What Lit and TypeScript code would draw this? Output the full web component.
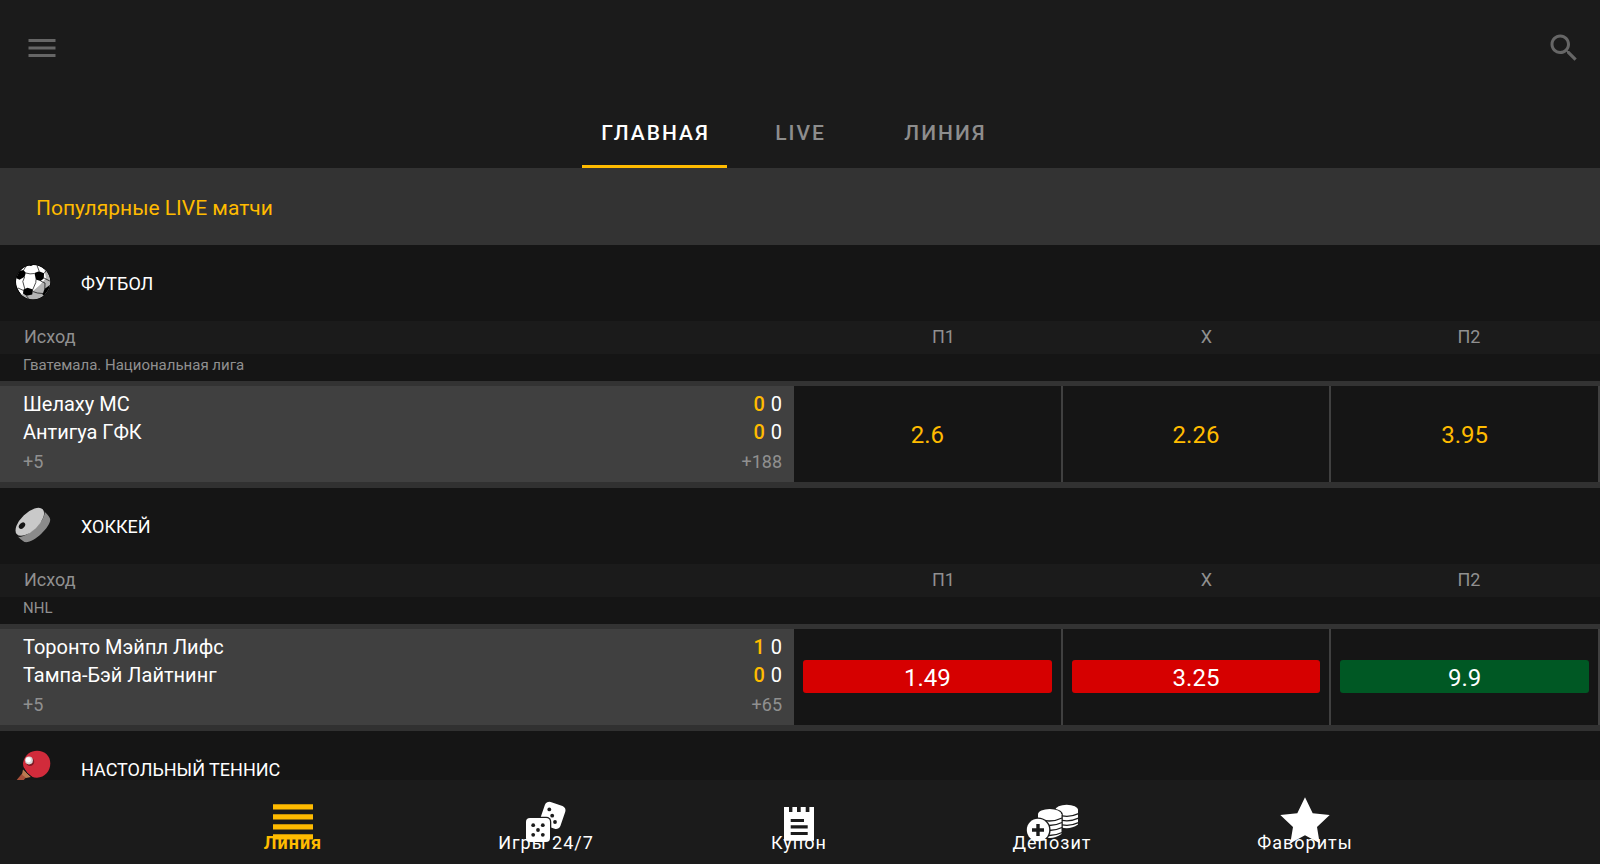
import { LitElement, html, svg, css, nothing } from "lit";
import { customElement, property, state } from "lit/decorators.js";
import { classMap } from "lit/directives/class-map.js";

type Trend = "same" | "down" | "up";
interface Odd { value: string; trend: Trend }
interface Match {
  league: string;
  teams: { name: string; total: string; period: string }[];
  left: string;
  right: string;
  odds: Odd[];
}
interface Sport { icon: string; name: string; matches: Match[] }

const SPORTS: Sport[] = [
  {
    icon: "football",
    name: "ФУТБОЛ",
    matches: [
      {
        league: "Гватемала. Национальная лига",
        teams: [
          { name: "Шелаху МС", total: "0", period: "0" },
          { name: "Антигуа ГФК", total: "0", period: "0" },
        ],
        left: "+5",
        right: "+188",
        odds: [
          { value: "2.6", trend: "same" },
          { value: "2.26", trend: "same" },
          { value: "3.95", trend: "same" },
        ],
      },
    ],
  },
  {
    icon: "hockey",
    name: "ХОККЕЙ",
    matches: [
      {
        league: "NHL",
        teams: [
          { name: "Торонто Мэйпл Лифс", total: "1", period: "0" },
          { name: "Тампа-Бэй Лайтнинг", total: "0", period: "0" },
        ],
        left: "+5",
        right: "+65",
        odds: [
          { value: "1.49", trend: "down" },
          { value: "3.25", trend: "down" },
          { value: "9.9", trend: "up" },
        ],
      },
    ],
  },
  { icon: "tennis", name: "НАСТОЛЬНЫЙ ТЕННИС", matches: [] },
];

const SPORT_ICONS: Record<string, unknown> = {
  football: svg`
    <defs><clipPath id="ball"><circle cx="18" cy="18" r="17.2"/></clipPath></defs>
    <circle cx="18" cy="18" r="17.6" fill="#000"/>
    <g clip-path="url(#ball)">
      <circle cx="18" cy="18" r="17" fill="#fff"/>
      <path d="M29 3 31 14 Q25 22 18 27 Q12 31 4 30 L10 38 H38 V3Z" fill="#b4b4b4"/>
      <g fill="#000">
        <path d="M19.5 9 24 7.2 29 9.2 28.800 14.500 25.500 17 20.800 15.500Z"/>
        <path d="M4 7 8.500 6 10.800 8.800 9.600 12.800 4.500 15.800 1 14Z"/>
        <path d="M8.500 25.500 12.500 23.800 18 25.500 17.200 30.500 11.500 31.800 8 29.500Z"/>
        <path d="M29.500 25 35.500 20.500 36 29 30 33.500 27.500 30.500Z"/>
        <path d="M11 1 15 0 20 0 16 2Z"/>
        <path d="M30 3.500 32.500 4.500 36 12 33 9.500Z"/>
        <path d="M0 23 2.200 23.500 4.500 29 2 30Z"/>
      </g>
      <g fill="none" stroke="#000" stroke-width=".7">
        <path d="M10.800 9Q15 10.500 19.500 9.500M22 1.500 24.200 7.200M29 9.500 31.500 6M9.600 13 7.800 17.500 9.800 25M21 15.500 20.800 18.500 17.800 25.500M25.500 17 30 19 29.800 25M17.800 27.500Q22 29.500 28 29.500M11.500 32 14.500 35.500M3 24 8.500 26.500M29 14 34.800 17M8.500 6.300 11.500 1.500"/>
      </g>
    </g>`,
  hockey: svg`
    <path d="M4.5 28.5 27.5 3 C31 6 35 9.500 35.200 12.500 C35.500 20 18 37 9.500 35 C6.500 33 4 31 2.500 29Z" fill="#8b8b8b"/>
    <path d="M1.500 27.500C3 30.500 11 28.500 20 20C27.500 12.500 30.500 5.500 27.500 2.800" fill="none" stroke="#151515" stroke-width="2"/>
    <ellipse cx="14.800" cy="14.800" rx="17.900" ry="8.800" transform="rotate(-44 14.800 14.800)" fill="#c9c9c9"/>
    <ellipse cx="7" cy="18.600" rx="3.700" ry="2.500" transform="rotate(-44 7 18.600)" fill="#151515"/>`,
  tennis: svg`
    <path d="M7.500 23 11.500 27 4 35 0 32Z" fill="#a5503a"/>
    <path d="M8 19.500 16 27 11 28 7 24.500Z" fill="#b97a50"/>
    <path d="M8 13C10 4 16 .800 22 .800C30 .800 35.300 6 35.300 13.500C35.300 21 30 27.500 22 27.700C18.500 27.800 16 26.500 13.500 24C10.500 21 8 18 8 13Z" fill="#d12b3b"/>
    <path d="M8.300 17.500Q11 23.500 17 27.300" fill="none" stroke="#151515" stroke-width="1"/>
    <circle cx="15" cy="11.800" r="4.200" fill="#7d1a24"/>
    <circle cx="14" cy="10.500" r="3.900" fill="#d7d7d7"/>
    <circle cx="13.300" cy="9.800" r="2.600" fill="#fff"/>`,
};

const NAV_ICONS: Record<string, unknown> = {
  line: svg`<path d="M5 8.300h40v5.200H5zM5 18.300h40v5.200H5zM5 28.300h40v5.200H5zM5 38.300h40v5.200H5z"/>`,
  games: svg`
    <rect x="21" y="7.600" width="21.500" height="24" rx="4.500" transform="rotate(19 32.500 19.200)"/>
    <g class="hole"><circle cx="28.300" cy="13.400" r="1.900"/><circle cx="31.200" cy="19.700" r="1.900"/><circle cx="34" cy="26" r="1.900"/>
    <rect x="3.800" y="20.700" width="26.500" height="26.500" rx="5"/></g>
    <rect x="5" y="22" width="24" height="24" rx="4"/>
    <g class="hole"><circle cx="12.200" cy="29.200" r="1.900"/><circle cx="21.800" cy="29.200" r="1.900"/><circle cx="17" cy="34" r="1.900"/><circle cx="12.200" cy="38.800" r="1.900"/><circle cx="21.800" cy="38.800" r="1.900"/></g>`,
  coupon: svg`<path fill-rule="evenodd" d="M10 11h5v5h3.400v-5H23v5h3.700v-5h5v5h3.700v-5H40v33.700H10zM16.700 23h13.300v3H16.700zM16.700 29.300h17v3.200h-17zM16.700 35.900h17v3h-17z"/>`,
  deposit: svg`
    <path d="M28.500 13.500V28.500Q39.700 36 51 28.500V13.500Z"/>
    <ellipse cx="39.700" cy="14" rx="11.400" ry="5.200"/>
    <g class="cut"><path d="M30 18.500Q41 22.500 51.500 17.700M30 23Q41 27 51.500 22.200M30 27.500Q41 31.500 51.500 26.700"/></g>
    <path class="hole" d="M9.500 18.500C10 10.500 35.800 10.500 35.800 18.500V41H9.500Z"/>
    <path d="M11 18.500V38Q23 46 34.500 38V18.500Z"/>
    <ellipse cx="22.700" cy="18.300" rx="11.700" ry="5.200"/>
    <g class="cut"><path d="M11 23Q24 27.500 35 22M11 27.500Q24 32 35 26.500M11 32.500Q24 37 35 31.500M11 37.500Q24 42 35 36.500"/></g>
    <circle class="hole" cx="11" cy="34" r="12.600"/>
    <circle cx="11" cy="34" r="11.200"/>
    <path class="hole" d="M9.300 28h3.400v4.300H17v3.400h-4.300V40H9.300v-4.300H5v-3.400h4.300z"/>`,
  star: svg`<path d="M25 1.300 32.700 17.300 49.700 19 37 31 39.700 47.300 25 39.300 10.300 47.300 13 31 .3 19 17.300 17.300Z"/>`,
};

@customElement("odd-button")
export class OddButton extends LitElement {
  @property() value = "";
  @property() trend: Trend = "same";

  static styles = css`
    :host {
      display: flex;
      align-items: center;
      padding: 0 9px 1px;
      border-right: 2px solid #404040;
      background: #151515;
    }
    button {
      flex: 1;
      height: 33px;
      padding: 3px 0 0;
      border: 0;
      border-radius: 3px;
      background: none;
      color: #ffbb00;
      font: 400 24px/30px Roboto, sans-serif;
      cursor: pointer;
    }
    .down { background: #d60000; color: #fff; }
    .up { background: #005824; color: #fff; }
  `;

  render() {
    return html`<button type="button" class=${classMap({ down: this.trend === "down", up: this.trend === "up" })}>${this.value}</button>`;
  }
}

@customElement("sport-section")
export class SportSection extends LitElement {
  @property({ attribute: false }) sport!: Sport;

  static styles = css`
    :host { display: block; background: #151515; }
    h2 {
      display: flex;
      align-items: center;
      height: 74px;
      margin: 0;
      padding: 2px 0 0 15px;
      color: #fff;
      font-size: 18px;
      font-weight: 400;
      line-height: 24px;
    }
    .icon { width: 36px; height: 36px; margin: 0 30px 4px 0; }
    .columns {
      display: grid;
      grid-template-columns: 812fr 263fr 263fr 262fr;
      padding-bottom: 2px;
      background: #1b1b1b;
      color: #909090;
      font-size: 18px;
      line-height: 31px;
      text-align: center;
    }
    .columns .first { padding-left: 24px; text-align: left; }
    .league {
      padding: 0 23px 4px;
      color: #909090;
      font-size: 15px;
      line-height: 23px;
    }
    .match {
      display: grid;
      grid-template-columns: 794fr 806fr;
      height: 96px;
      border-top: 5px solid #333;
      border-bottom: 6px solid #313131;
    }
    .info {
      padding: 4px 12px 0 23px;
      background: #404040;
    }
    .team {
      display: flex;
      gap: 6px;
      color: #fff;
      font-size: 20px;
      line-height: 28px;
    }
    .name { flex: 1; }
    .total { color: #ffbb00; font-weight: 500; }
    .extra {
      display: flex;
      justify-content: space-between;
      color: #909090;
      font-size: 18px;
      line-height: 32px;
    }
    .odds { display: grid; grid-template-columns: repeat(3, 1fr); }
  `;

  render() {
    const { icon, name, matches } = this.sport;
    return html`
      <h2><svg class="icon" viewBox="0 0 36 36" aria-hidden="true">${SPORT_ICONS[icon]}</svg>${name}</h2>
      ${matches.length
        ? html`<div class="columns"><span class="first">Исход</span><span>П1</span><span>X</span><span>П2</span></div>`
        : nothing}
      ${matches.map(
        (m) => html`
          <div class="league">${m.league}</div>
          <div class="match">
            <div class="info">
              ${m.teams.map(
                (t) => html`<div class="team"><span class="name">${t.name}</span><span class="total">${t.total}</span><span>${t.period}</span></div>`
              )}
              <div class="extra"><span>${m.left}</span><span>${m.right}</span></div>
            </div>
            <div class="odds">
              ${m.odds.map((o) => html`<odd-button .value=${o.value} .trend=${o.trend}></odd-button>`)}
            </div>
          </div>
        `
      )}
    `;
  }
}

@customElement("app-root")
export class AppRoot extends LitElement {
  @state() private tab = 0;
  private tabs = ["ГЛАВНАЯ", "LIVE", "ЛИНИЯ"];
  private nav = [
    { icon: "line", label: "Линия" },
    { icon: "games", label: "Игры 24/7" },
    { icon: "coupon", label: "Купон" },
    { icon: "deposit", label: "Депозит" },
    { icon: "star", label: "Фавориты" },
  ];

  static styles = css`
    :host {
      display: flex;
      flex-direction: column;
      height: 100vh;
      background: #151515;
      color: #fff;
      font-family: Roboto, sans-serif;
    }
    header { background: #1b1b1b; }
    .toolbar {
      display: flex;
      justify-content: space-between;
      align-items: center;
      height: 96px;
      padding: 0 18px 0 24px;
    }
    button { border: 0; padding: 0; background: none; font-family: inherit; cursor: pointer; }
    .tool { display: flex; fill: #666; }
    .tool svg { width: 36px; height: 36px; }
    .tabs { display: flex; justify-content: center; padding-right: 1px; }
    .tab {
      min-width: 145px;
      height: 72px;
      padding: 5px 0 0 2px;
      border-bottom: 3px solid transparent;
      color: #8d8d8d;
      font-size: 21px;
      font-weight: 500;
      letter-spacing: 2px;
    }
    .tab.active { color: #fff; border-color: #ffbb00; }
    main { flex: 1; min-height: 0; overflow: hidden; }
    h1 {
      margin: 0;
      padding: 25px 36px 22px;
      background: #333;
      color: #ffbb00;
      font-size: 21px;
      font-weight: 400;
      line-height: 30px;
    }
    nav {
      display: flex;
      justify-content: center;
      height: 84px;
      padding-right: 2px;
      background: #1b1b1b;
    }
    nav a {
      display: flex;
      flex: 0 1 253px;
      flex-direction: column;
      align-items: center;
      padding-top: 16px;
      color: #fff;
      fill: #fff;
      font-size: 18px;
      line-height: 24px;
      letter-spacing: 1px;
      text-decoration: none;
    }
    nav a.active { color: #ffbb00; fill: #ffbb00; font-weight: 700; }
    nav svg { width: 50px; height: 50px; margin-bottom: -15px; overflow: visible; }
    .hole { fill: #1b1b1b; }
    .cut { fill: none; stroke: #1b1b1b; stroke-width: 1.3; }
  `;

  render() {
    return html`
      <header>
        <div class="toolbar">
          <button type="button" class="tool" aria-label="Меню"><svg viewBox="0 0 24 24"><path d="M3 18h18v-2H3v2zm0-5h18v-2H3v2zm0-7v2h18V6H3z"/></svg></button>
          <button type="button" class="tool" aria-label="Поиск"><svg viewBox="0 0 24 24"><path d="M15.500 14h-.790l-.280-.270C15.410 12.590 16 11.110 16 9.500 16 5.910 13.090 3 9.500 3S3 5.910 3 9.500 5.910 16 9.500 16c1.610 0 3.090-.590 4.230-1.570l.270.280v.790l5 4.990L20.490 19l-4.990-5zm-6 0C7.010 14 5 11.990 5 9.500S7.010 5 9.500 5 14 7.010 14 9.500 11.990 14 9.500 14z"/></svg></button>
        </div>
        <div class="tabs" role="tablist">
          ${this.tabs.map(
            (t, i) => html`<button type="button" role="tab" aria-selected=${i === this.tab} class=${classMap({ tab: true, active: i === this.tab })} @click=${() => (this.tab = i)}>${t}</button>`
          )}
        </div>
      </header>
      <main>
        <h1>Популярные LIVE матчи</h1>
        ${SPORTS.map((s) => html`<sport-section .sport=${s}></sport-section>`)}
      </main>
      <nav>
        ${this.nav.map(
          (n, i) => html`<a href="#${n.icon}" class=${classMap({ active: i === 0 })}><svg viewBox="0 0 50 50" aria-hidden="true">${NAV_ICONS[n.icon]}</svg><span>${n.label}</span></a>`
        )}
      </nav>
    `;
  }
}
